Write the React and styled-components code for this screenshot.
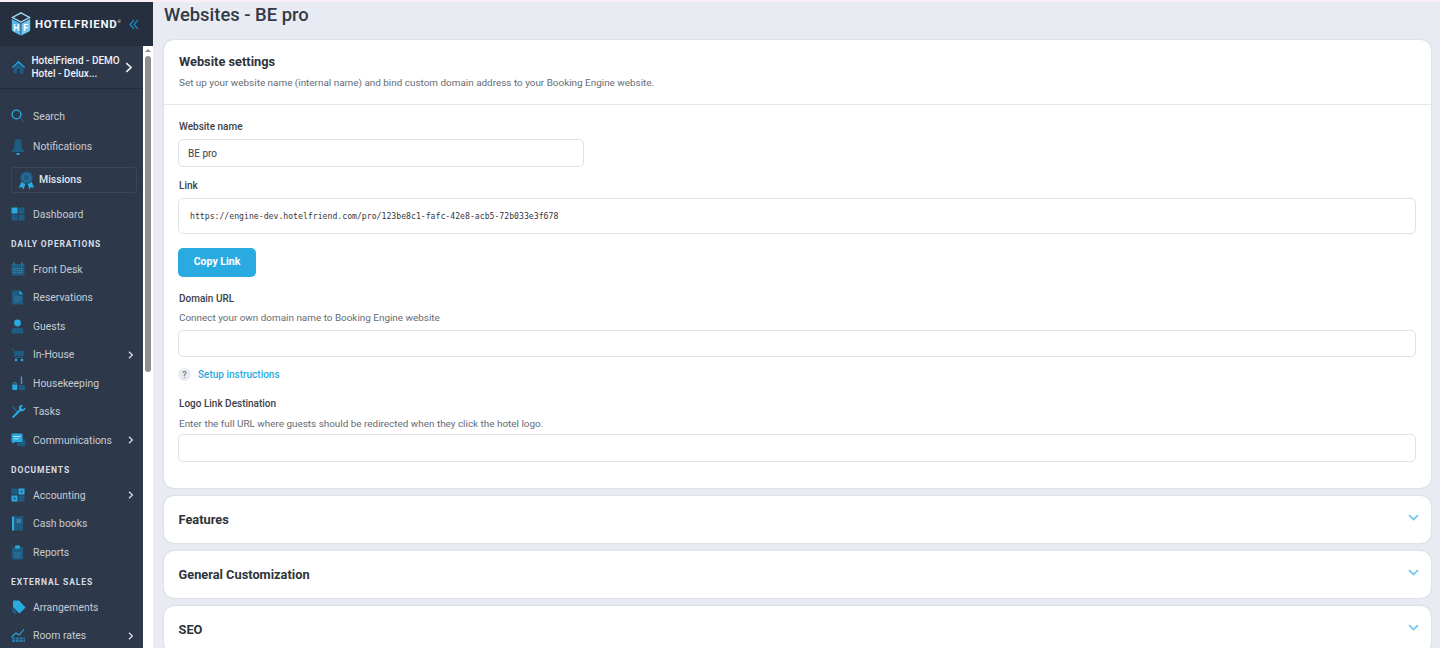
import React from "react";
import styled, { createGlobalStyle } from "styled-components";

const BRIGHT = "#29abe2";
const DIM = "#1f5c82";

const GlobalStyle = createGlobalStyle`
  html, body {
    margin: 0;
    padding: 0;
    height: 100%;
    overflow: hidden;
    background: #e8ebf1;
    font-family: Roboto, "Liberation Sans", sans-serif;
  }
  * { box-sizing: border-box; }
`;

const Page = styled.div`
  width: 1440px;
  height: 648px;
  overflow: hidden;
  display: flex;
  flex-direction: column;
`;

const TopStrip = styled.div`
  height: 2px;
  flex: none;
  background: #fbeef6;
`;

const Shell = styled.div`
  flex: 1;
  min-height: 0;
  display: flex;
`;

const Sidebar = styled.aside`
  width: 153px;
  flex: none;
  display: flex;
  flex-direction: column;
  background: #2d384a;
`;

const Brand = styled.div`
  height: 44px;
  flex: none;
  display: flex;
  align-items: center;
  padding-left: 11px;
  background: #252f3f;
`;

const BrandName = styled.span`
  margin-left: 4px;
  color: #f2f5f8;
  font-size: 11.5px;
  font-weight: 700;
  letter-spacing: 0.72px;
`;

const BrandMark = styled.sup`
  font-size: 4px;
  font-weight: 400;
  vertical-align: 5px;
  line-height: 0;
`;

const Collapse = styled.span`
  margin-left: 8px;
  display: flex;
`;

const SidebarBody = styled.div`
  flex: 1;
  min-height: 0;
  display: flex;
`;

const Nav = styled.nav`
  width: 143px;
  flex: none;
  overflow: hidden;
`;

const Scrollbar = styled.div`
  width: 10px;
  flex: none;
  background: #fff;
  display: flex;
  flex-direction: column;
  align-items: center;
  padding-top: 3px;
`;

const ScrollArrow = styled.div`
  width: 0;
  height: 0;
  border-left: 3px solid transparent;
  border-right: 3px solid transparent;
  border-bottom: 3px solid #8c8c8c;
`;

const ScrollThumb = styled.div`
  width: 6px;
  height: 316px;
  margin-top: 4px;
  border-radius: 3px;
  background: #8f8f8f;
`;

const HotelSwitch = styled.div`
  height: 43px;
  display: flex;
  align-items: center;
  padding-left: 11px;
  border-bottom: 1px solid #232c3a;
  color: #eef1f5;
  font-size: 10px;
  font-weight: 500;
  line-height: 13.5px;
`;

const HotelName = styled.div`
  width: 93px;
  margin-left: -1.5px;
  white-space: nowrap;
`;

const MainMenu = styled.div`
  padding-top: 13px;
`;

const Row = styled.div`
  height: ${(p) => p.$h || 28.5}px;
  display: flex;
  align-items: center;
  padding-left: 11px;
  color: #c6ccd5;
  font-size: 10.4px;
`;

const IconBox = styled.span`
  width: 22px;
  height: 16px;
  flex: none;
  display: flex;
  align-items: center;
`;

const Caret = styled.span`
  margin-left: auto;
  margin-right: 9px;
  display: flex;
`;

const MissionBox = styled.div`
  height: 26px;
  margin: 5px 6px 7px 11px;
  display: flex;
  align-items: center;
  padding: 0 0 2px 6px;
  border: 1px solid #3a4759;
  border-radius: 3px;
  color: #dfe4ea;
  font-size: 10.5px;
  font-weight: 500;
`;

const MissionIcon = styled.span`
  width: 21px;
  display: flex;
  margin-bottom: -2px;
`;

const Section = styled.div`
  height: 26.5px;
  padding: 10px 0 0 11px;
  color: #d8dde4;
  font-size: 8.5px;
  line-height: 11px;
  font-weight: 700;
  letter-spacing: 0.88px;
`;

const Main = styled.main`
  flex: 1;
  min-width: 0;
  padding: 0 9px 0 11px;
`;

const Title = styled.h1`
  margin: 0;
  height: 38px;
  padding-top: 2px;
  color: #333a45;
  font-size: 18.4px;
  line-height: 22px;
  font-weight: 500;
`;

const Card = styled.section`
  margin-bottom: 8px;
  background: #fff;
  border-radius: 10px;
  box-shadow: 0 0 2px rgba(120, 135, 160, 0.35);
`;

const CardHead = styled.header`
  height: 65px;
  padding: 14px 15px 0;
  border-bottom: 1px solid #e2e6ee;
`;

const CardTitle = styled.h2`
  margin: 0;
  color: #2e333b;
  font-size: 12.8px;
  line-height: 16px;
  font-weight: 700;
`;

const Hint = styled.p`
  margin: ${(p) => p.$m || "0"};
  color: #666b73;
  font-size: 9.92px;
  line-height: 13px;
`;

const CardBody = styled.div`
  height: 383px;
  padding: 15px 15px 0 14px;
`;

const Label = styled.label`
  display: block;
  margin-top: ${(p) => p.$top || 0}px;
  padding-left: 1px;
  color: #3c4149;
  font-size: 10px;
  line-height: 13px;
  font-weight: 500;
`;

const Field = styled.div`
  width: ${(p) => p.$w || "100%"};
  height: ${(p) => p.$h || 28}px;
  margin-top: ${(p) => p.$top || 0}px;
  display: flex;
  align-items: center;
  padding-left: ${(p) => p.$pad || 9}px;
  border: 1px solid #dfe1e8;
  border-radius: 5px;
  background: #fff;
  color: #3c4149;
  font-size: 10px;
`;

const Mono = styled.span`
  font-family: "DejaVu Sans Mono", "Liberation Mono", monospace;
  font-size: 8.17px;
  color: #33383f;
`;

const CopyButton = styled.button`
  display: block;
  width: 78px;
  height: 29px;
  margin-top: 14px;
  padding: 0 0 2px;
  border: 0;
  border-radius: 5px;
  background: #29abe2;
  color: #fff;
  font-family: inherit;
  font-size: 10.5px;
  font-weight: 700;
`;

const HelpRow = styled.div`
  display: flex;
  align-items: center;
  margin-top: 11px;
  height: 13px;
`;

const HelpDot = styled.span`
  width: 13px;
  height: 13px;
  margin-right: 7px;
  display: flex;
  align-items: center;
  justify-content: center;
  border-radius: 50%;
  background: #e8ebf1;
  color: #6d737c;
  font-size: 9px;
  font-weight: 500;
`;

const HelpLink = styled.a`
  color: #29abe2;
  font-size: 10px;
  font-weight: 500;
`;

const Collapsed = styled(Card)`
  height: 47px;
  display: flex;
  align-items: center;
  justify-content: space-between;
  padding: 0 12px 0 14.5px;
`;

const CollapsedTitle = styled.h3`
  margin: 0;
  padding-bottom: 1px;
  color: #2e333b;
  font-size: 12.8px;
  font-weight: 700;
`;

const ChevronWrap = styled.span`
  display: flex;
  margin-bottom: 5px;
`;

function Svg({ w = 16, h = 16, children }) {
  return (
    <svg width={w} height={h} viewBox={`0 0 ${w} ${h}`}>
      {children}
    </svg>
  );
}

function Logo() {
  return (
    <svg width="20" height="24" viewBox="0 0 20 24">
      <path d="M10 0.8 18.5 5.500 10 10 1.500 5.500Z" fill="none" stroke="#a8dcf5" strokeWidth="1.4" />
      <path d="M.8 7 9.600 11.500 9.600 23.500 2 19.500Q.8 18.800 .8 17.500Z" fill="#52b9ec" />
      <path d="M19.200 7 10.400 11.500 10.400 23.500 18 19.500Q19.200 18.800 19.200 17.500Z" fill="#74c8f0" />
      <text x="5.300" y="19" fontSize="8.500" fontWeight="700" fill="#fff" textAnchor="middle" fontFamily="Roboto">H</text>
      <text x="14.700" y="19" fontSize="8.500" fontWeight="700" fill="#fff" textAnchor="middle" fontFamily="Roboto">F</text>
    </svg>
  );
}

const DoubleLeft = () => (
  <svg width="10" height="11" viewBox="0 0 10 11" fill="none" stroke="#1f8cc0" strokeWidth="1.2">
    <path d="M5 1 1 5.500l4 4.500M9 1 5 5.500l4 4.500" />
  </svg>
);

const CaretRight = ({ size = 8, color = "#dfe3e8" }) => (
  <svg width={size * 0.7} height={size} viewBox="0 0 7 10" fill="none" stroke={color} strokeWidth="1.5">
    <path d="M1.2 1 5.500 5 1.2 9" />
  </svg>
);

const ChevronDown = () => (
  <svg width="11" height="7" viewBox="0 0 11 7" fill="none" stroke="#7cc7f2" strokeWidth="1.8">
    <path d="M1 1.2 5.500 5.400 10 1.2" />
  </svg>
);

const icons = {
  home: (
    <Svg w={15} h={14}>
      <path d="M7.500 1 14.500 7.500H12.500V13.500H9V9H6V13.500H2.500V7.500H.5Z" fill={DIM} />
      <path d="M7.500 1 14.500 7.500H13L7.500 2.800 2 7.500H.5Z" fill={BRIGHT} />
    </Svg>
  ),
  search: (
    <Svg w={14} h={14}>
      <circle cx="5.500" cy="5.500" r="4.400" fill="none" stroke={BRIGHT} strokeWidth="1.400" />
      <path d="M9.200 9.200 13 13" stroke={DIM} strokeWidth="1.200" />
    </Svg>
  ),
  bell: (
    <Svg w={14} h={17}>
      <path d="M7 1C9.700 1 10.800 3.300 10.800 6V10L13.500 14H.5L3.200 10V6C3.200 3.300 4.300 1 7 1Z" fill={DIM} />
      <rect x="5.200" y="15" width="3.600" height="1.700" rx=".8" fill={BRIGHT} />
    </Svg>
  ),
  ribbon: (
    <Svg w={17} h={19}>
      <path d="M3.500 10.500 .8 17 4 16 5.500 18.500 7.500 13ZM13.500 10.500 16.200 17 13 16 11.500 18.500 9.500 13Z" fill={BRIGHT} />
      <circle cx="8.500" cy="6.800" r="6.300" fill={DIM} />
      <circle cx="8.500" cy="6.800" r="3.800" fill="none" stroke="#2f7ba8" strokeWidth="1" />
    </Svg>
  ),
  dashboard: (
    <Svg w={14} h={14}>
      <rect x=".5" y=".5" width="6" height="6" rx=".5" fill={BRIGHT} />
      <rect x="7.500" y=".5" width="6" height="6" rx=".5" fill={DIM} />
      <rect x=".5" y="7.500" width="6" height="6" rx=".5" fill={DIM} />
      <rect x="7.500" y="7.500" width="6" height="6" rx=".5" fill={DIM} />
    </Svg>
  ),
  calendar: (
    <Svg w={14} h={14}>
      <rect x=".5" y="2" width="13" height="11.500" rx="1" fill={DIM} />
      <path d="M3 .5V3M11 .5V3" stroke={BRIGHT} strokeWidth="1" />
      <path d="M2 6.500H12M2 8.500H12M2 10.500H12" stroke="#4f8fb5" strokeWidth=".8" strokeDasharray="1.200 .8" />
    </Svg>
  ),
  doc: (
    <Svg w={13} h={15}>
      <path d="M1.800.5H8.500L12 4V13.500Q12 14.500 11 14.500H2Q1 14.500 1 13.500V1.300Q1 .5 1.800.5Z" fill={DIM} />
      <path d="M8.500.5 12 4H8.500Z" fill={BRIGHT} />
      <path d="M3 7H10M3 9.300H10M3 11.600H8" stroke="#3b7fa8" strokeWidth=".8" />
    </Svg>
  ),
  guest: (
    <Svg w={13} h={15}>
      <circle cx="6.500" cy="4" r="3.400" fill={BRIGHT} />
      <path d="M.7 14.500V12Q.7 8.700 4 8.700H9Q12.300 8.700 12.300 12V14.500Z" fill={DIM} />
    </Svg>
  ),
  cart: (
    <Svg w={14} h={14}>
      <path d="M.5 .8H2.500L4 9.500H12" fill="none" stroke={DIM} strokeWidth="1" />
      <path d="M3 3H13.500L12.300 8H3.800Z" fill={DIM} />
      <circle cx="5" cy="12" r="1.300" fill={BRIGHT} />
      <circle cx="11" cy="12" r="1.300" fill={BRIGHT} />
    </Svg>
  ),
  broom: (
    <Svg w={15} h={15}>
      <path d="M10.500 .5V8" stroke={BRIGHT} strokeWidth="1.300" />
      <path d="M8 9H13.500L14.500 14H7.500Z" fill={DIM} />
      <path d="M1 8.500H6.500L6 14H1.500Z" fill={BRIGHT} />
      <path d="M2 8Q3.700 4.500 5.500 8" fill="none" stroke={BRIGHT} strokeWidth=".9" />
    </Svg>
  ),
  wrench: (
    <Svg w={15} h={15}>
      <path d="M2 2 7.500 7.500 6.200 8.800.8 3.300Z" fill={DIM} />
      <path d="M14.300 3.200 11.900 5.500 9.900 3.800 12 1.300C10 .4 7.800 1.800 7.800 4 7.800 4.600 8 5.100 8.200 5.500L1.500 12.200C.8 13 1.900 14.500 2.900 13.700L9.700 7C12.300 7.800 15 5.800 14.300 3.200Z" fill={BRIGHT} />
    </Svg>
  ),
  chat: (
    <Svg w={15} h={15}>
      <path d="M6 6H13.500Q14.500 6 14.500 7V12Q14.500 13 13.500 13V14.500L11.500 13H6Z" fill={DIM} />
      <path d="M1.500 .5H10.500Q11.500 .5 11.500 1.500V8Q11.500 9 10.500 9H4L1.500 11V9Q.5 9 .5 8V1.500Q.5 .5 1.500 .5Z" fill={BRIGHT} />
      <path d="M2.500 3.500H9.500M2.500 5.800H7.500" stroke="#bfe6f7" strokeWidth=".9" />
    </Svg>
  ),
  accounting: (
    <Svg w={14} h={14}>
      <rect x=".5" y=".5" width="6" height="6" fill={DIM} />
      <rect x="7.500" y=".5" width="6" height="6" fill={BRIGHT} />
      <rect x=".5" y="7.500" width="6" height="6" fill={BRIGHT} />
      <rect x="7.500" y="7.500" width="6" height="6" fill={DIM} />
      <rect x="2.500" y="9.500" width="2" height="2" fill={DIM} />
      <rect x="9.500" y="2.500" width="2" height="2" fill={DIM} />
    </Svg>
  ),
  book: (
    <Svg w={13} h={15}>
      <rect x="1" y=".5" width="2.500" height="14" fill={BRIGHT} />
      <rect x="3.500" y=".5" width="8.500" height="14" fill={DIM} />
      <rect x="5.500" y="3" width="4.500" height="4" fill="#3b7fa8" />
    </Svg>
  ),
  report: (
    <Svg w={13} h={15}>
      <rect x="1" y="2" width="11" height="12.500" rx="1" fill={DIM} />
      <rect x="4" y=".5" width="5" height="3" rx="1" fill={BRIGHT} />
      <path d="M3 8H10M3 10H10M3 12H10" stroke="#3b7fa8" strokeWidth=".8" />
    </Svg>
  ),
  tag: (
    <Svg w={15} h={15}>
      <path d="M1 7 6 12 4.500 14.500 .8 11Z" fill={DIM} />
      <path d="M2.500 .5H8L14.500 7.500 8.500 13.500 2 7V1Z" fill={BRIGHT} />
    </Svg>
  ),
  chart: (
    <Svg w={15} h={15}>
      <path d="M.5 9 5 5 8 7 13 1.500" fill="none" stroke={BRIGHT} strokeWidth="1.100" />
      <path d="M1 10.500H14M1 13H14" stroke="#2a7aa8" strokeWidth="1.800" strokeDasharray="3 .8" />
    </Svg>
  ),
};

const menu = [
  { kind: "row", icon: "search", label: "Search" },
  { kind: "row", icon: "bell", label: "Notifications", h: 31.5 },
  { kind: "mission", label: "Missions" },
  { kind: "row", icon: "dashboard", label: "Dashboard" },
  { kind: "section", label: "DAILY OPERATIONS" },
  { kind: "row", icon: "calendar", label: "Front Desk" },
  { kind: "row", icon: "doc", label: "Reservations" },
  { kind: "row", icon: "guest", label: "Guests" },
  { kind: "row", icon: "cart", label: "In-House", more: true },
  { kind: "row", icon: "broom", label: "Housekeeping" },
  { kind: "row", icon: "wrench", label: "Tasks" },
  { kind: "row", icon: "chat", label: "Communications", more: true },
  { kind: "section", label: "DOCUMENTS" },
  { kind: "row", icon: "accounting", label: "Accounting", more: true },
  { kind: "row", icon: "book", label: "Cash books" },
  { kind: "row", icon: "report", label: "Reports" },
  { kind: "section", label: "EXTERNAL SALES" },
  { kind: "row", icon: "tag", label: "Arrangements" },
  { kind: "row", icon: "chart", label: "Room rates", more: true },
];

function MenuItem({ item }) {
  if (item.kind === "section") return <Section>{item.label}</Section>;
  if (item.kind === "mission") {
    return (
      <MissionBox>
        <MissionIcon>{icons.ribbon}</MissionIcon>
        {item.label}
      </MissionBox>
    );
  }
  return (
    <Row $h={item.h}>
      <IconBox>{icons[item.icon]}</IconBox>
      {item.label}
      {item.more && (
        <Caret>
          <CaretRight />
        </Caret>
      )}
    </Row>
  );
}

export default function App() {
  return (
    <Page>
      <GlobalStyle />
      <TopStrip />
      <Shell>
        <Sidebar>
          <Brand>
            <Logo />
            <BrandName>
              HOTELFRIEND<BrandMark>®</BrandMark>
            </BrandName>
            <Collapse>
              <DoubleLeft />
            </Collapse>
          </Brand>
          <SidebarBody>
            <Nav>
              <HotelSwitch>
                <IconBox>{icons.home}</IconBox>
                <HotelName>
                  HotelFriend - DEMO
                  <br />
                  Hotel - Delux...
                </HotelName>
                <CaretRight size={11} color="#eef1f5" />
              </HotelSwitch>
              <MainMenu>
                {menu.map((item) => (
                  <MenuItem key={item.label} item={item} />
                ))}
              </MainMenu>
            </Nav>
            <Scrollbar>
              <ScrollArrow />
              <ScrollThumb />
            </Scrollbar>
          </SidebarBody>
        </Sidebar>
        <Main>
          <Title>Websites - BE pro</Title>
          <Card>
            <CardHead>
              <CardTitle>Website settings</CardTitle>
              <Hint $m="6px 0 0">
                Set up your website name (internal name) and bind custom domain address to your Booking Engine website.
              </Hint>
            </CardHead>
            <CardBody>
              <Label>Website name</Label>
              <Field $w="406px" $top={6}>BE pro</Field>
              <Label $top={12}>Link</Label>
              <Field $h={36} $top={6} $pad={11}>
                <Mono>https://engine-dev.hotelfriend.com/pro/123be8c1-fafc-42e8-acb5-72b033e3f678</Mono>
              </Field>
              <CopyButton>Copy Link</CopyButton>
              <Label $top={15}>Domain URL</Label>
              <Hint $m="6px 0 0 1px">Connect your own domain name to Booking Engine website</Hint>
              <Field $top={6} $h={27} />
              <HelpRow>
                <HelpDot>?</HelpDot>
                <HelpLink>Setup instructions</HelpLink>
              </HelpRow>
              <Label $top={16}>Logo Link Destination</Label>
              <Hint $m="7px 0 0 1px">Enter the full URL where guests should be redirected when they click the hotel logo.</Hint>
              <Field $top={4} />
            </CardBody>
          </Card>
          {["Features", "General Customization", "SEO"].map((name) => (
            <Collapsed key={name}>
              <CollapsedTitle>{name}</CollapsedTitle>
              <ChevronWrap>
                <ChevronDown />
              </ChevronWrap>
            </Collapsed>
          ))}
        </Main>
      </Shell>
    </Page>
  );
}
